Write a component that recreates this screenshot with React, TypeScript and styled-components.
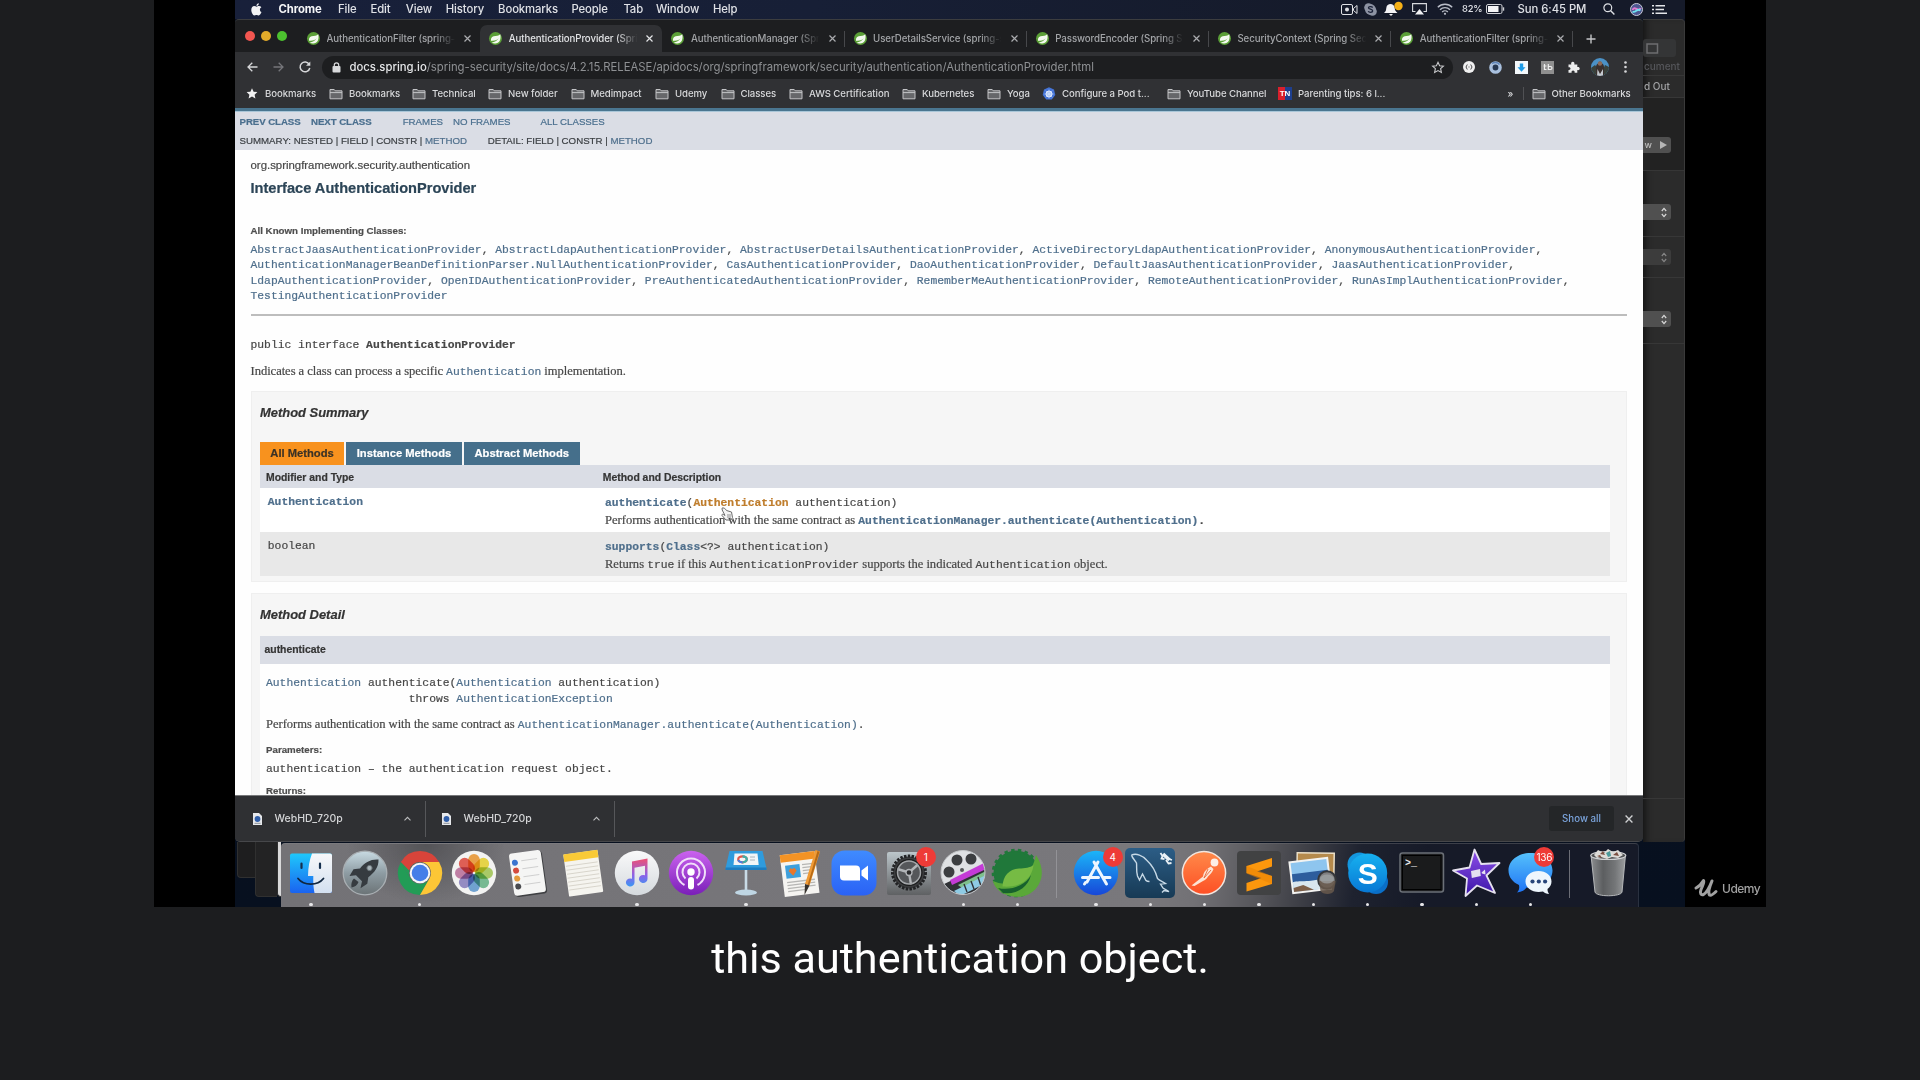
import React from 'react';
import styled, { createGlobalStyle, css } from 'styled-components';

const sans = '"Liberation Sans", Arial, sans-serif';
const serif = '"Liberation Serif", "Times New Roman", serif';
const mono = '"Liberation Mono", "Courier New", monospace';
const ui = 'Inter, "Liberation Sans", sans-serif';

const Global = createGlobalStyle`
  *, *::before, *::after { box-sizing: border-box; }
  html, body { margin: 0; background: #1c1d1f; overflow: hidden; }
  svg { display: block; flex: none; overflow: visible; }
`;

/* ---------- Player ---------- */

const Player = styled.div`
  width: 1920px;
  height: 1080px;
  background: #1c1d1f;
  display: flex;
  flex-direction: column;
  align-items: center;
  overflow: hidden;
`;

const VideoFrame = styled.div`
  width: 1612px;
  height: 907px;
  background: #000;
  display: flex;
  padding-left: 81px;
  flex: none;
`;

const Desktop = styled.div`
  width: 1450px;
  height: 907px;
  background: linear-gradient(#0b1120, #07101f);
  display: flex;
  flex-direction: column;
  overflow: hidden;
  flex: none;
`;

const Caption = styled.p`
  margin: 25px 0 0;
  font: 400 43.15px/54px Roboto, sans-serif;
  color: #fff;
  white-space: nowrap;
`;

const Watermark = styled.div`
  width: 81px;
  padding: 0 0 9px 10px;
  display: flex;
  align-items: flex-end;
  gap: 4px;
  color: #a2a2a2;
  font: 500 12px/18px ${ui};
  letter-spacing: -0.5px;
`;

/* ---------- Menu bar ---------- */

const MenuBar = styled.header`
  height: 19px;
  display: flex;
  align-items: center;
  padding-bottom: 1px;
  background: linear-gradient(90deg, #18203a, #171f36 40%, #151a29 80%);
  color: #dfe1e6;
  font: 500 11.3px/18px ${ui};
  flex: none;
`;

const MenuItem = styled.span<{ $w: number; $strong?: boolean }>`
  width: ${p => p.$w}px;
  flex: none;
  white-space: nowrap;
  letter-spacing: -0.1px;
  ${p => p.$strong && css`font-weight: 700; color: #f4f5f7;`}
`;

const StatusCell = styled.span<{ $w: number }>`
  width: ${p => p.$w}px;
  display: flex;
  justify-content: center;
  flex: none;
  white-space: nowrap;
`;

const Percent = styled.span`
  width: 20px;
  font-size: 9.4px;
  letter-spacing: -0.2px;
  white-space: nowrap;
  flex: none;
`;

const Clock = styled.span`
  width: 83px;
  padding-left: 8.5px;
  white-space: nowrap;
  letter-spacing: -0.05px;
  flex: none;
`;

const Spacer = styled.div`flex: 1;`;

/* ---------- Windows ---------- */

const WindowsRow = styled.div`
  height: 823px;
  display: flex;
  flex: none;
`;

const Browser = styled.section`
  width: 1408px;
  height: 823px;
  display: flex;
  flex-direction: column;
  background: #2f3033;
  border-top: 1px solid #3c3d3f;
  border-bottom: 1px solid #46474a;
  border-radius: 4px 4px 5px 5px;
  overflow: hidden;
  flex: none;
`;

const TabStrip = styled.div`
  height: 32px;
  display: flex;
  align-items: flex-end;
  background: #1d1e20;
  flex: none;
`;

const TrafficLights = styled.div`
  width: 63px;
  height: 32px;
  padding-left: 10px;
  display: flex;
  align-items: center;
  gap: 6px;
  flex: none;
`;

const Light = styled.i<{ $c: string }>`
  width: 10px;
  height: 10px;
  border-radius: 50%;
  background: ${p => p.$c};
`;

const Tab = styled.div<{ $active?: boolean; $line?: boolean }>`
  width: 182.2px;
  height: 27px;
  display: flex;
  align-items: center;
  padding: 0 9px 0 9px;
  gap: 6.5px;
  position: relative;
  color: ${p => (p.$active ? '#e3e4e6' : '#a3a5a8')};
  background: ${p => (p.$active ? '#303134' : 'transparent')};
  border-radius: 7px 7px 0 0;
  flex: none;
  &::after {
    content: '';
    position: absolute;
    right: 0;
    top: 6px;
    width: 1px;
    height: 16px;
    background: ${p => (p.$line ? '#47484b' : 'transparent')};
  }
`;

const TabTitle = styled.span`
  flex: 1;
  overflow: hidden;
  white-space: nowrap;
  font: 500 9.7px/16px ${ui};
  letter-spacing: -0.08px;
  mask-image: linear-gradient(90deg, #000 82%, transparent 98%);
`;

const NewTab = styled.div`
  height: 27px;
  padding-left: 13px;
  display: flex;
  align-items: center;
`;

const Toolbar = styled.div`
  height: 30px;
  display: flex;
  align-items: center;
  background: #303134;
  flex: none;
`;

const ToolCell = styled.span<{ $w: number }>`
  width: ${p => p.$w}px;
  display: flex;
  justify-content: center;
  align-items: center;
  flex: none;
`;

const Omnibox = styled.div`
  width: 1131px;
  height: 23px;
  padding: 0 8px 0 9.5px;
  border-radius: 12px;
  background: #1d1e20;
  display: flex;
  align-items: center;
  color: #8e9093;
  font: 400 11.3px/18px ${ui};
  flex: none;
`;

const Url = styled.span`
  flex: 1;
  margin-left: 9px;
  white-space: nowrap;
  letter-spacing: 0.006px;
  b { font-weight: 500; color: #e4e5e7; }
`;

const BookmarksBar = styled.nav`
  height: 26px;
  padding: 0 0 3px 10px;
  display: flex;
  align-items: center;
  background: #303134;
  flex: none;
`;

const Bookmark = styled.span<{ $w: number }>`
  width: ${p => p.$w}px;
  display: flex;
  align-items: center;
  gap: 6px;
  flex: none;
  white-space: nowrap;
  color: #d8d9db;
  font: 500 9.6px/16px ${ui};
  letter-spacing: -0.05px;
`;

const BarDivider = styled.i`
  width: 1px;
  height: 13px;
  margin: 0 8px 0 6px;
  background: #505154;
`;

/* ---------- Javadoc page ---------- */

const Page = styled.main`
  height: 687px;
  background: #fefefe;
  border-top: 3px solid #4a7690;
  overflow: hidden;
  color: #474747;
  font-family: ${sans};
  -webkit-text-stroke: 0.2px;
  flex: none;
`;

const DocNav = styled.div`
  height: 39px;
  background: #dadde5;
  padding-left: 4.5px;
  border-top: 1px solid #a9c6d8;
  font-size: 9.7px;
  line-height: 19px;
  color: #3b3f43;
`;

const NavRow = styled.div`
  height: 19px;
  display: flex;
  white-space: nowrap;
`;

const NavCell = styled.span<{ $w: number; $link?: boolean; $strong?: boolean }>`
  width: ${p => p.$w}px;
  flex: none;
  ${p => p.$link && css`color: #4a6f8e;`}
  ${p => p.$strong && css`font-weight: 700; letter-spacing: -0.08px;`}
`;

const Link = styled.a<{ $hot?: boolean }>`
  color: ${p => (p.$hot ? '#bf7d2c' : '#4f6f8c')};
`;

const Body = styled.div`
  padding: 6px 16px 0 15.5px;
`;

const PackageName = styled.div`
  font-size: 11.4px;
  line-height: 18px;
`;

const ClassTitle = styled.h1`
  margin: 5px 0 0;
  font-size: 14.6px;
  line-height: 18px;
  color: #2c4557;
`;

const ListLabel = styled.h4<{ $mt: number }>`
  margin: ${p => p.$mt}px 0 0;
  font-size: 9.73px;
  line-height: 14px;
  color: #4e4e4e;
`;

const Code = styled.code<{ $strong?: boolean }>`
  font-family: ${mono};
  font-size: 11.34px;
  ${p => p.$strong && css`font-weight: 700;`}
`;

const ClassList = styled.div`
  margin-top: 5px;
  line-height: 15.36px;
  white-space: nowrap;
  ${Code} { display: block; height: 15.36px; }
`;

const Rule = styled.hr`
  height: 2px;
  margin: 9.5px 0 0;
  border: 0;
  background: #bdbdbd;
`;

const Signature = styled.pre`
  margin: 21.5px 0 0;
  font: 11.34px/16px ${mono};
`;

const Prose = styled.p<{ $mt?: number }>`
  margin: ${p => p.$mt ?? 0}px 0 0;
  font: 12.55px/18px ${serif};
  letter-spacing: -0.03px;
  white-space: nowrap;
  ${Code} { letter-spacing: 0; }
`;

const Section = styled.section<{ $mt: number; $h: number }>`
  margin-top: ${p => p.$mt}px;
  height: ${p => p.$h}px;
  padding: 12px 16px 0 8.5px;
  background: #f6f6f6;
  border: 1px solid #efefef;
`;

const SectionTitle = styled.h3`
  margin: 0;
  font-size: 12.95px;
  font-style: italic;
  line-height: 18px;
  color: #333;
`;

const MethodTabs = styled.div`
  margin-top: 20px;
  height: 23px;
  display: flex;
  gap: 2px;
`;

const MethodTab = styled.span<{ $active?: boolean; $w: number }>`
  width: ${p => p.$w}px;
  background: ${p => (p.$active ? '#f8921e' : '#456f8b')};
  color: ${p => (p.$active ? '#3a3226' : '#fff')};
  font-size: 11.2px;
  font-weight: 700;
  line-height: 23px;
  text-align: center;
`;

const TableHead = styled.div`
  height: 23px;
  padding-left: 6px;
  display: grid;
  grid-template-columns: 336.8px 1fr;
  background: #dadde5;
  color: #353535;
  font-size: 10.4px;
  font-weight: 700;
  line-height: 25px;
`;

const TableRow = styled.div<{ $alt?: boolean }>`
  height: 44px;
  padding: 6px 0 0 7.8px;
  display: grid;
  grid-template-columns: 337.2px 1fr;
  background: ${p => (p.$alt ? '#e8e8e8' : '#fff')};
  line-height: 17px;
`;

const DescLine = styled.div`
  height: 17.5px;
  white-space: nowrap;
  position: relative;
  font: 12.55px/17.5px ${serif};
`;

const Pointer = styled.svg`
  position: absolute;
  left: 116px;
  top: 13px;
`;

const MemberTitle = styled.h4`
  margin: 12px 0 0;
  height: 28px;
  padding-left: 4.500px;
  background: #dadde5;
  font-size: 10.4px;
  line-height: 28px;
  color: #353535;
`;

const MemberBody = styled.div`
  height: 160px;
  padding: 12px 0 0 6px;
  background: #fefefe;
`;

const MemberCode = styled.pre`
  margin: 0;
  font: 11.34px/15.5px ${mono};
`;

/* ---------- Download shelf ---------- */

const Shelf = styled.footer`
  flex: 1;
  display: flex;
  align-items: center;
  background: #2f3033;
  border-top: 1px solid #77787a;
  color: #d4d5d7;
  font: 500 10.5px/18px ${ui};
`;

const Download = styled.div<{ $w: number; $pl: number }>`
  width: ${p => p.$w}px;
  height: 36px;
  padding: 0 14.500px 0 ${p => p.$pl}px;
  border-right: 1px solid #56575a;
  display: flex;
  align-items: center;
  gap: 13px;
  flex: none;
  span { flex: 1; }
`;

const ShowAll = styled.button`
  width: 65px;
  height: 25px;
  border: 0;
  border-radius: 3px;
  background: #242628;
  color: #7ba4dc;
  font: 500 9.7px/24px ${ui};
  padding: 0;
`;

/* ---------- Window behind the browser ---------- */

const BackWindow = styled.aside`
  width: 42px;
  height: 823px;
  padding-top: 19px;
  background: #2b2b2b;
  border-radius: 0 4px 4px 0;
  border-right: 1px solid #3a3a3a;
  border-top: 1px solid #3c3c3c;
  box-shadow: inset 7px 0 7px -5px #111;
  overflow: hidden;
  flex: none;
  font: 500 10px/14px ${ui};
`;

const BackButton = styled.div`
  width: 33px;
  height: 18px;
  padding: 3.5px 0 0 3px;
  border-radius: 3px;
  background: #343536;
`;

const BackText = styled.div<{ $mt: number; $c: string }>`
  margin-top: ${p => p.$mt}px;
  height: 14px;
  padding-left: 1px;
  color: ${p => p.$c};
  white-space: nowrap;
`;

const BackLine = styled.i<{ $mt: number }>`
  display: block;
  height: 1px;
  margin-top: ${p => p.$mt}px;
  background: #373737;
`;

const Stage = styled.div`
  height: 73px;
  padding-top: 39px;
  background: #222;
  border-bottom: 1px solid #363636;
`;

const Stepper = styled.div<{ $mt: number; $dim?: boolean }>`
  width: 28px;
  height: 16px;
  margin-top: ${p => p.$mt}px;
  padding: 0 4px 0 0;
  display: flex;
  align-items: center;
  justify-content: flex-end;
  gap: 8px;
  border-radius: 0 3px 3px 0;
  color: ${p => (p.$dim ? '#777' : '#bcbcbc')};
  background: ${p => (p.$dim ? '#3c3c3c' : '#505050')};
  font-size: 9px;
`;

/* ---------- Dock ---------- */

const DockRow = styled.div`
  height: 65px;
  display: flex;
  flex: none;
`;

const Behind = styled.i<{ $ml?: number; $w: number; $h: number; $c: string }>`
  width: ${p => p.$w}px;
  height: ${p => p.$h}px;
  margin-left: ${p => p.$ml ?? 0}px;
  background: ${p => p.$c};
  border-radius: 0 0 0 4px;
  border-left: 1px solid #303030;
  border-bottom: 1px solid #303030;
  flex: none;
`;

const Dock = styled.div`
  width: 1358px;
  height: 64px;
  margin-top: 1px;
  padding-left: 2.8px;
  display: flex;
  border-radius: 4px 4px 0 0;
  border-top: 1px solid #8a8a8d55;
  border-right: 1px solid #2a3140;
  background:
    radial-gradient(ellipse 80px 60px at 145px 0, #454549b0, transparent),
    linear-gradient(100deg, #737276 0, #79787c 64%, #727175 67.5%, #535358 72.5%, #3f4047 75%, #1e222f 79%, #161a28 84%);
  flex: none;
`;

const DockItem = styled.div<{ $running?: boolean }>`
  width: 54.35px;
  height: 63px;
  padding-top: 6px;
  display: flex;
  justify-content: center;
  position: relative;
  flex: none;
  &::after {
    content: '';
    position: absolute;
    left: 25.6px;
    bottom: 1px;
    width: 3.4px;
    height: 3.4px;
    border-radius: 50%;
    background: ${p => (p.$running ? '#e6e6e8' : 'transparent')};
  }
`;

const DockDivider = styled.i`
  width: 1px;
  height: 48px;
  margin: 6px 11.5px 0;
  background: #a5a5aa;
  opacity: 0.6;
  flex: none;
`;

const Badge = styled.span<{ $left: number }>`
  position: absolute;
  left: ${p => p.$left}px;
  top: 3px;
  min-width: 20px;
  height: 20px;
  border-radius: 10px;
  background: #ee3b37;
  color: #fff;
  font: 400 10px/20px ${ui};
  letter-spacing: -0.2px;
  text-align: center;
`;

/* ---------- Small glyphs ---------- */

const SpringLeaf = () => (
  <svg width="13" height="13" viewBox="0 0 13 13">
    <circle cx="6.5" cy="6.5" r="6.5" fill="#5b9f37" />
    <path d="M11.200 2.200C10 4 7 3.600 4.600 4.300 2.200 5 1.400 7.400 2.300 9c2.300-.6 5.300-.2 7.300-2.800C8 9.200 5.400 9.600 2.800 10.400 5.500 12.300 9.600 11.400 10.900 8.400c.8-2 .9-4.200.3-6.200z" fill="#f3f9ef" />
  </svg>
);

const Close = ({ size = 7, color = '#b5b6b9' }: { size?: number; color?: string }) => (
  <svg width={size} height={size} viewBox="0 0 7 7">
    <path d="M.5.5l6 6M6.500.5l-6 6" stroke={color} strokeWidth="1.2" fill="none" />
  </svg>
);

const Folder = () => (
  <svg width="14" height="12" viewBox="0 0 14 12">
    <path d="M1 1.500h4.200l1 1.300H13v8H1z" fill="#66676a" stroke="#c3c4c6" strokeWidth="1" />
    <path d="M1 4.600h12" stroke="#c3c4c6" strokeWidth="1" />
  </svg>
);

const Star = ({ filled }: { filled?: boolean }) => (
  <svg width="14" height="13" viewBox="0 0 14 13">
    <path
      d="M7 1.200l1.600 3.500 3.800.4-2.800 2.600.8 3.800L7 9.600l-3.400 1.900.8-3.800L1.600 5.100l3.800-.4z"
      fill={filled ? '#f1f1f2' : 'none'}
      stroke={filled ? 'none' : '#c9cacc'}
      strokeWidth="1.100"
    />
  </svg>
);

const Kubernetes = () => (
  <svg width="14" height="14" viewBox="0 0 14 14">
    <path d="M7 .3l5 2.300 1.300 5.400-3.500 4.500-5.600 0L.7 8 2 2.600z" fill="#4574d6" />
    <circle cx="7" cy="7" r="3" fill="#a9c3f3" stroke="#dfe9fc" strokeWidth="1" />
    <path d="M7 2.500v9M2.500 7h9M3.800 3.800l6.400 6.400M10.200 3.800l-6.400 6.400" stroke="#cfdefa" strokeWidth=".6" />
  </svg>
);

const TnMark = styled.i`
  width: 14px;
  height: 13px;
  background: linear-gradient(90deg, #d81f2c 50%, #1e3f8f 50%);
  color: #fff;
  font: 700 8px/13px ${sans};
  text-align: center;
  flex: none;
`;

const Apple = () => (
  <svg width="11" height="13" viewBox="0 0 11 13">
    <path d="M7.800.3c.1 1.300-1 2.600-2.300 2.600C5.400 1.600 6.500.500 7.800.3zM8.900 6.800c0-1.200.6-1.900 1.500-2.500-.6-.8-1.500-1.200-2.500-1.200-1 0-1.600.6-2.300.6S4 3.100 3.200 3.100C1.700 3.200.3 4.600.3 7.100c0 2.400 1.600 5.400 3 5.400.8 0 1.200-.5 2.200-.5s1.300.5 2.200.5c1.200 0 2.300-2 2.800-3.400-1-.4-1.600-1.200-1.600-2.300z" fill="#f2f3f5" />
  </svg>
);

const FileIcon = () => (
  <svg width="9" height="12" viewBox="0 0 9 12">
    <path d="M0 0h6l3 3v9H0z" fill="#e6e8eb" />
    <circle cx="4.500" cy="6" r="2.900" fill="#2f5da8" />
    <path d="M1.500 10.300h6" stroke="#8b8f96" strokeWidth="1" />
  </svg>
);

const Chevron = () => (
  <svg width="7" height="5" viewBox="0 0 7 5">
    <path d="M.5 4.300l3-3 3 3" stroke="#bcbdbf" strokeWidth="1.100" fill="none" />
  </svg>
);

const Arrow = ({ flip, color }: { flip?: boolean; color: string }) => (
  <svg width="11" height="10" viewBox="0 0 11 10" transform={flip ? 'scale(-1 1)' : undefined}>
    <path d="M10.500 5H1M5.300.7L1 5l4.300 4.300" stroke={color} strokeWidth="1.300" fill="none" />
  </svg>
);

const UpDown = ({ color }: { color: string }) => (
  <svg width="6" height="11" viewBox="0 0 6 11">
    <path d="M.8 4L3 1.400 5.200 4M.8 7L3 9.600 5.200 7" stroke={color} strokeWidth="1.200" fill="none" />
  </svg>
);

/* ---------- Dock icons, drawn on a 46 x 46 grid ---------- */

const Icon = ({ children }: { children: React.ReactNode }) => (
  <svg width="46" height="46" viewBox="0 0 46 46">{children}</svg>
);

const Finder = () => (
  <Icon>
    <defs>
      <linearGradient id="fL" x2="0" y2="1"><stop stopColor="#1fc8fb" /><stop offset="1" stopColor="#1a63f0" /></linearGradient>
      <linearGradient id="fR" x2="0" y2="1"><stop stopColor="#f7f8fa" /><stop offset="1" stopColor="#d3e0f0" /></linearGradient>
    </defs>
    <rect x="2" y="3.500" width="42" height="39.500" rx="2" fill="url(#fL)" />
    <path d="M24 3.500h18a2 2 0 012 2V41a2 2 0 01-2 2H26.500c-1-5-1.400-10-1.200-17H20c.2-9 1.500-16 4-22.500z" fill="url(#fR)" />
    <path d="M13.500 13.500v4.500M32 13.500v4.500" stroke="#15304f" strokeWidth="2.200" strokeLinecap="round" />
    <path d="M10 28.500c6 7.500 19.500 7.500 25.500 0" stroke="#10263f" strokeWidth="1.800" fill="none" strokeLinecap="round" />
  </Icon>
);

const Launchpad = () => (
  <Icon>
    <defs><linearGradient id="lp" x2="0" y2="1"><stop stopColor="#c8dbe3" /><stop offset=".5" stopColor="#8e9ca3" /><stop offset="1" stopColor="#6b7376" /></linearGradient></defs>
    <circle cx="23" cy="23" r="21.800" fill="url(#lp)" stroke="#a9afb3" strokeWidth="1.300" />
    <path d="M36.500 9.500c-8-.5-14 3-18.500 9l-6.500.8L7.500 26l6.500-.8 6 6-1.500 7 6.800-4.500 1-6.500c6-4.500 10.500-10 10.200-17.700z" fill="#363b40" />
    <circle cx="27.500" cy="18" r="2.600" fill="#a9b5ba" stroke="#6d767b" />
    <path d="M12 28.500c-2.500 2-3 6-2.500 9 3.500-.5 6-2.500 7-5.500z" fill="#363b40" />
  </Icon>
);

const Chrome = () => (
  <Icon>
    <path d="M3.900 12A22 22 0 0023 45l9.500-16.500a11 11 0 01-19 0z" fill="#229c56" />
    <path d="M42.100 12A22 22 0 0123 45l9.500-16.500A11 11 0 0023 12z" fill="#fcc636" />
    <path d="M3.900 12l9.600 16.500a11 11 0 0110-16.500z" fill="#229c56" />
    <path d="M3.900 12a22 22 0 0138.200 0H23a11 11 0 00-10.800 8.500z" fill="#d8443a" />
    <circle cx="23" cy="23" r="10.300" fill="#f7f7f7" />
    <circle cx="23" cy="23" r="8.300" fill="#447ee8" />
  </Icon>
);

const petals = ['#f2992e', '#f0d92c', '#a5cb52', '#66b888', '#5d9bd6', '#8a80c4', '#c0709f', '#e5483c'];
const PetalShape = styled.rect`
  mix-blend-mode: multiply;
`;

const Photos = () => (
  <Icon>
    <circle cx="23" cy="23" r="22.200" fill="#f3f3f2" />
    {petals.map((c, i) => (
      <PetalShape key={c} x="17.200" y="4" width="11.600" height="18" rx="5.800" fill={c} opacity=".85" transform={`rotate(${i * 45} 23 23)`} />
    ))}
  </Icon>
);

const reminderDots = ['#3b74cf', '#d44a3c', '#e39a3b', '#4a4b4f'];
const Reminders = () => (
  <Icon>
    <g transform="rotate(-8 23 23)">
      <rect x="8" y="2.500" width="31.500" height="43" rx="3" fill="#3f4043" />
      <rect x="6.500" y="1.500" width="32" height="42.500" rx="3" fill="#f5f5f4" />
      {reminderDots.map((c, i) => (
        <g key={c}>
          <circle cx="11.500" cy={11 + i * 8} r="3" fill={c} />
          <path d={`M18 ${10 + i * 8}h16`} stroke="#cfcfcf" strokeWidth="1" />
        </g>
      ))}
    </g>
  </Icon>
);

const Notes = () => (
  <Icon>
    <g transform="rotate(-8 23 23)">
      <rect x="6" y="2" width="34.500" height="42.500" rx="1" fill="#f5f4ef" />
      <rect x="6" y="2" width="34.500" height="7.500" fill="#f9ca37" />
      {[14, 18, 22, 26, 30, 34, 38].map(y => <path key={y} d={`M7 ${y}h32`} stroke="#d6d3ca" strokeWidth=".9" />)}
    </g>
  </Icon>
);

const Music = () => (
  <Icon>
    <defs>
      <linearGradient id="mu" x2="0" y2="1"><stop stopColor="#f9f9fa" /><stop offset="1" stopColor="#d5dade" /></linearGradient>
      <linearGradient id="mn" x2="0" y2="1"><stop stopColor="#ef4f73" /><stop offset=".6" stopColor="#8c62e8" /><stop offset="1" stopColor="#3b97f3" /></linearGradient>
    </defs>
    <circle cx="23" cy="23" r="22.200" fill="url(#mu)" />
    <path d="M18 11.500l15.500-3v20.500a4.300 4 0 11-2.500-3.700V15.800l-10.500 2v14.700a4.300 4 0 11-2.500-3.700z" fill="url(#mn)" />
  </Icon>
);

const Podcasts = () => (
  <Icon>
    <defs><linearGradient id="po" x2="0" y2="1"><stop stopColor="#ca62ee" /><stop offset="1" stopColor="#7a1fb8" /></linearGradient></defs>
    <circle cx="23" cy="23" r="22.200" fill="url(#po)" />
    <g fill="none" stroke="#f0def9" strokeWidth="2">
      <path d="M16.500 35a14 14 0 1113 0" />
      <path d="M17.500 28.500a8.500 8.500 0 1111 0" />
    </g>
    <circle cx="23" cy="22" r="3.700" fill="#fff" />
    <rect x="20" y="27" width="6" height="12.500" rx="3" fill="#fff" />
  </Icon>
);

const Keynote = () => (
  <Icon>
    <path d="M23 18v23" stroke="#c9dbe6" strokeWidth="2.600" />
    <ellipse cx="23" cy="42.500" rx="11" ry="3" fill="#bfd6e4" />
    <path d="M6.500 1h33l4 17.500h-41z" fill="#2f9bdd" />
    <path d="M2.500 17.500h41v2.500h-41z" fill="#1d7cc0" />
    <path d="M11.500 3.500h23l1.200 11.500H10.500z" fill="#f2f5f7" />
    <ellipse cx="19.500" cy="9.300" rx="4.300" ry="3" fill="none" stroke="#e0574b" strokeWidth="2.200" />
    <path d="M19.500 6.300a4.300 3 0 010 6" fill="none" stroke="#3cb0a8" strokeWidth="2.200" />
    <path d="M15.300 10a4.300 3 0 004.200 2.300" fill="none" stroke="#4a7fe0" strokeWidth="2.200" />
    <path d="M27 7h5M27 10h5" stroke="#aab4bb" />
  </Icon>
);

const Pages = () => (
  <Icon>
    <g transform="rotate(-7 23 23)">
      <rect x="5" y="3" width="35" height="42" fill="#f5f4f1" />
      <rect x="5" y="3" width="35" height="7.500" fill="#f39325" />
      <rect x="9" y="14" width="14.500" height="13" fill="#3ea0dc" />
      <path d="M16 25l-4-5 2-3 2 1 2-1 2 3z" fill="#e8772b" />
      <path d="M26 15h11M26 18h11M26 21h11M26 24h8M9 31h28M9 34h28M9 37h28M9 40h18" stroke="#b6b6b4" strokeWidth="1.300" />
    </g>
    <path d="M38.500 0l4.500 1.500-10.500 34-4.500-1.500z" fill="#f09a34" />
    <path d="M40.500 1l2 .700-10.500 34-1.500-.5z" fill="#b66a16" />
    <path d="M28 34l4.500 1.500-5 9.500z" fill="#36312c" />
  </Icon>
);

const Zoom = () => (
  <Icon>
    <defs><linearGradient id="zm" x2="0" y2="1"><stop stopColor="#3f8bff" /><stop offset="1" stopColor="#2a62f5" /></linearGradient></defs>
    <rect x=".5" y=".5" width="45" height="45" rx="13" fill="url(#zm)" />
    <path d="M9 15.500h16a4 4 0 014 4v11H13a4 4 0 01-4-4z" fill="#fff" />
    <path d="M30.500 20.500l6.500-5v15l-6.500-5z" fill="#fff" />
  </Icon>
);

const Settings = () => (
  <Icon>
    <defs><linearGradient id="st" x2="0" y2="1"><stop stopColor="#bcc6cb" /><stop offset="1" stopColor="#5f6163" /></linearGradient></defs>
    <rect x="1" y="2" width="44" height="43" rx="2" fill="url(#st)" />
    <circle cx="23" cy="22.500" r="16" fill="#3b3c3e" />
    <circle cx="23" cy="22.500" r="16.500" fill="none" stroke="#222325" strokeWidth="3" strokeDasharray="2.500 1.300" />
    <circle cx="23" cy="22.500" r="12.500" fill="#55575a" stroke="#1b1c1d" strokeWidth="2" />
    <path d="M23 22.500L11.500 19M23 22.500l9-8M23 22.500l2 12" stroke="#b2b5b8" strokeWidth="2.400" />
    <circle cx="23" cy="22.500" r="11.500" fill="none" stroke="#a3a6a9" strokeWidth="1.500" />
    <circle cx="23" cy="22.500" r="3" fill="#2a2b2d" stroke="#b2b5b8" strokeWidth="1.300" />
  </Icon>
);

const ScreenFlow = () => (
  <Icon>
    <clipPath id="sf"><circle cx="23" cy="22.500" r="22" /></clipPath>
    <g clipPath="url(#sf)">
      <rect width="46" height="46" fill="#dfe1e4" />
      <circle cx="17" cy="10" r="5.500" fill="#3c3e41" />
      <circle cx="31" cy="9" r="5.500" fill="#3c3e41" />
      <circle cx="9" cy="22" r="5.500" fill="#3c3e41" />
      <circle cx="22" cy="20" r="2" fill="#55575a" />
      <path d="M-2 37L48 13v36H-2z" fill="#303236" />
      <path d="M10 30l34-17v7L12 35z" fill="#c43bd6" />
      <path d="M18 35l28-14v5L22 38z" fill="#7fc08c" />
      <path d="M14 41l32-16v8L20 46z" fill="#8ecbe4" />
      <path d="M24 34l3 8M31 31l3 8M38 27l3 9" stroke="#303236" strokeWidth="1.400" />
    </g>
    <circle cx="23" cy="22.500" r="22" fill="none" stroke="#c6c9cc" strokeWidth="1" />
  </Icon>
);

const SpringSuite = () => (
  <Icon>
    <circle cx="22" cy="23" r="22.500" fill="#20783a" stroke="#20783a" strokeWidth="3.600" strokeDasharray="3.400 3.300" />
    <path d="M42 5c6 9 8 20 3 29-5 10-17 15-28 12C6 44 0 37-1 31c10 5 30 4 38-12 3-6 4-10 5-14z" fill="#5aa839" />
    <path d="M39.500 15C38 28 28 38 8.500 36.500 9 26 15 19 25 18.500c6-.3 11-.5 14.500-3.500z" fill="#76bb44" />
    <path d="M4 38c12 3 27-2 33-13-3 12-14 20-28 18z" fill="#17612d" />
  </Icon>
);

const AppStore = () => (
  <Icon>
    <defs><linearGradient id="as" x2="0" y2="1"><stop stopColor="#1bb5f8" /><stop offset="1" stopColor="#1747d8" /></linearGradient></defs>
    <circle cx="23" cy="23" r="22.200" fill="url(#as)" />
    <g stroke="#eef6ff" strokeWidth="3" strokeLinecap="round" fill="none">
      <path d="M25 12L14 32M21 12l12.500 22" />
      <path d="M9.500 27.500h16M31 27.500h6" />
      <path d="M12.500 32.500l-1 1.500" />
    </g>
  </Icon>
);

const Workbench = () => (
  <Icon>
    <defs><linearGradient id="wb" x2="0" y2="1"><stop stopColor="#2c5d86" /><stop offset="1" stopColor="#173a55" /></linearGradient></defs>
    <rect x="-2" y="-2" width="50" height="50" rx="5" fill="url(#wb)" />
    <path d="M4.500 5c5-2 11 .5 15 5 6 5.500 9.500 12.500 11 18.500 2.500 2.500 6 3.500 8 5l-5 .5 2.500 4 6 3.500-5-1-2 2M4.500 5c.5 2.500 3.500 5.500 5 8 .5 4.500-.5 8 1 13l2 4 3-6 3.500 6.500c1 1 2.500 1 3.500 1" fill="none" stroke="#c7d9e6" strokeWidth="1.400" />
    <path d="M36 4l6.500 6" stroke="#eaf1f6" strokeWidth="3.600" />
    <path d="M33.500 3l2 3-1 2.500 3 .5M39 10l2.500 3.500 3-.5M42 9l3 1" stroke="#eaf1f6" strokeWidth="1.800" fill="none" />
  </Icon>
);

const Postman = () => (
  <Icon>
    <defs><linearGradient id="pm" x2="0" y2="1"><stop stopColor="#ff8a4a" /><stop offset="1" stopColor="#fd4f24" /></linearGradient></defs>
    <circle cx="23" cy="23" r="21.600" fill="url(#pm)" stroke="#f2e6df" strokeWidth="1.500" />
    <circle cx="33.500" cy="12.500" r="3.900" fill="#fdeee5" />
    <path d="M30 16.500l2.500 2.500c-1 3.500-3.500 5.500-5.500 7.500-1 2-3 3.500-5 4.500l-8.500 5-3-.5 11.500-9 .5-2.500c1-3 4-6 7.500-7.500z" fill="#fde3d3" />
    <path d="M27 19l-4 9 7-8" fill="none" stroke="#e5683a" strokeWidth=".9" />
  </Icon>
);

const Sublime = () => (
  <Icon>
    <rect x="1" y="1" width="44" height="44" rx="4" fill="#414243" />
    <path d="M10.500 16L36 8v8.500l-15 5L36 26v8l-25.500 7.500V33l15-5-15-5z" fill="#fb970d" />
    <path d="M10.500 16l25.500 10v8L10.500 23.500z" fill="#e98305" opacity=".55" />
  </Icon>
);

const Preview = () => (
  <Icon>
    <rect x="7" y="3" width="37" height="29" fill="#b58a4c" stroke="#eadfc8" strokeWidth="1.500" transform="rotate(1 26 17)" />
    <g transform="rotate(-7 20 24)">
      <rect x="0" y="9" width="40" height="33" fill="#f3f3f1" />
      <rect x="2" y="11" width="36" height="29" fill="#8ec5ee" />
      <rect x="2" y="22" width="36" height="9" fill="#2d5d9d" />
      <path d="M2 30c9-1 16 3 36-1v11H2z" fill="#d8e6ee" />
      <path d="M2 36l10-2 10 6H2z" fill="#7d5f48" />
    </g>
    <circle cx="37" cy="30" r="8.800" fill="#807f80" stroke="#35373a" strokeWidth="2" />
    <path d="M29 31h16.500l-1.500 10c-2 4-11 4-13.500 0z" fill="#68594c" opacity=".85" />
    <ellipse cx="37" cy="29" rx="7" ry="4.500" fill="#a3a6a8" opacity=".7" />
  </Icon>
);

const Letter = styled.text`
  font: 700 30px ${sans};
  fill: #fff;
`;

const Skype = () => (
  <Icon>
    <defs><linearGradient id="sk" x2="0" y2="1"><stop stopColor="#17b1f0" /><stop offset="1" stopColor="#0878d4" /></linearGradient></defs>
    <circle cx="14.500" cy="14.500" r="12" fill="#1496de" />
    <circle cx="31" cy="32" r="12" fill="#0a6fc8" />
    <circle cx="22.700" cy="23" r="19.500" fill="url(#sk)" />
    <Letter x="12.700" y="33.800">S</Letter>
  </Icon>
);

const Prompt = styled.text`
  font: 700 10px ${mono};
  fill: #e9e9e9;
`;

const Terminal = () => (
  <Icon>
    <rect x="1" y="3" width="43.500" height="39" rx="2.500" fill="#1d1e20" stroke="#6b7077" strokeWidth="1.500" />
    <rect x="3.500" y="5.500" width="38.500" height="34" fill="#1a1b1c" stroke="#000" />
    <Prompt x="6" y="15.500">&gt;_</Prompt>
  </Icon>
);

const IMovie = () => (
  <Icon>
    <defs><linearGradient id="im" x2="0" y2="1"><stop stopColor="#8e4fe8" /><stop offset="1" stopColor="#3a15a8" /></linearGradient></defs>
    <path d="M21.500-.5l6.700 14.500 18.300-1L33.500 25.500 42 43 24 35.500 12.500 46l1.500-17.500L0 20.500l16.500-3z" fill="url(#im)" stroke="#e5e1ee" strokeWidth="1.800" strokeLinejoin="round" />
    <path d="M18 21l9-2 .8 7-9 2zM28.500 22.500l3.500-3 .5 5-3.500-1z" fill="#e4dff0" />
  </Icon>
);

const Messages = () => (
  <Icon>
    <defs><linearGradient id="ms" x2="0" y2="1"><stop stopColor="#55c0fb" /><stop offset="1" stopColor="#1f74f5" /></linearGradient></defs>
    <path d="M22.500 3c12.500 0 22 7.500 22 17.500S35 38 22.500 38l-4-.4c-1.500 2.500-4.500 4.500-9.500 5 2-2 2.700-4.500 2-7.500C4.500 32 .5 27 .5 20.500.5 10.500 10 3 22.500 3z" fill="url(#ms)" />
    <path d="M30.500 21c7.500 0 13 4.500 13 10.500 0 3-1.500 5.500-4 7.500 0 2 .5 3.500 1.500 5-2.500 0-4.500-1-6-2.500-9 2-17.500-2.500-17.500-10 0-6 5.500-10.500 13-10.500z" fill="#eef6fd" />
    <circle cx="24.500" cy="31.500" r="2.100" fill="#27457a" />
    <circle cx="30.800" cy="31.500" r="2.100" fill="#27457a" />
    <circle cx="37.100" cy="31.500" r="2.100" fill="#27457a" />
  </Icon>
);

const Trash = () => (
  <Icon>
    <defs><linearGradient id="tr"><stop stopColor="#8b8d8f" /><stop offset=".35" stopColor="#5c5e60" /><stop offset=".7" stopColor="#747678" /><stop offset="1" stopColor="#9b9d9f" /></linearGradient></defs>
    <path d="M5 5l34.500 0-3.500 37c-1 5-26 5-27 0z" fill="url(#tr)" stroke="#b5b7b9" strokeWidth="1" />
    <ellipse cx="22.300" cy="5.500" rx="17.500" ry="4" fill="#4f5153" stroke="#cfd1d3" strokeWidth="1.200" />
    <path d="M8 5l4-5 6 3 4-4 5 3 5-2 5 5-5 3-6-1-5 2-6-2-4 1z" fill="#dddcd8" />
    <path d="M14 4l3-3 2 4zM27 5l4-3 2 4zM11 6l3-1 2 3z" fill="#7b4f40" />
    <path d="M20 3l4-2 1 5-3 1z" fill="#4c9a9a" />
  </Icon>
);

/* ---------- Data ---------- */

const menus: [string, number][] = [
  ['File', 32.5], ['Edit', 35.3], ['View', 40], ['History', 52.3], ['Bookmarks', 73.3],
  ['People', 52], ['Tab', 32.5], ['Window', 57], ['Help', 40],
];

const tabs = [
  { title: 'AuthenticationFilter (spring-' },
  { title: 'AuthenticationProvider (Spri', active: true },
  { title: 'AuthenticationManager (Spri', line: true },
  { title: 'UserDetailsService (spring-s', line: true },
  { title: 'PasswordEncoder (Spring Se', line: true },
  { title: 'SecurityContext (Spring Sec', line: true },
  { title: 'AuthenticationFilter (spring-', line: true },
];

const bookmarks: { label: string; w: number; icon?: React.ReactNode }[] = [
  { label: 'Bookmarks', w: 84, icon: <Star filled /> },
  { label: 'Bookmarks', w: 83 },
  { label: 'Technical', w: 76 },
  { label: 'New folder', w: 82.5 },
  { label: 'Medimpact', w: 84.5 },
  { label: 'Udemy', w: 65.5 },
  { label: 'Classes', w: 68.5 },
  { label: 'AWS Certification', w: 113 },
  { label: 'Kubernetes', w: 85 },
  { label: 'Yoga', w: 55 },
  { label: 'Configure a Pod t...', w: 125, icon: <Kubernetes /> },
  { label: 'YouTube Channel', w: 111 },
  { label: 'Parenting tips: 6 l...', w: 120, icon: <TnMark>TN</TnMark> },
];

const implementers = [
  ['AbstractJaasAuthenticationProvider', 'AbstractLdapAuthenticationProvider', 'AbstractUserDetailsAuthenticationProvider', 'ActiveDirectoryLdapAuthenticationProvider', 'AnonymousAuthenticationProvider'],
  ['AuthenticationManagerBeanDefinitionParser.NullAuthenticationProvider', 'CasAuthenticationProvider', 'DaoAuthenticationProvider', 'DefaultJaasAuthenticationProvider', 'JaasAuthenticationProvider'],
  ['LdapAuthenticationProvider', 'OpenIDAuthenticationProvider', 'PreAuthenticatedAuthenticationProvider', 'RememberMeAuthenticationProvider', 'RemoteAuthenticationProvider', 'RunAsImplAuthenticationProvider'],
  ['TestingAuthenticationProvider'],
];

const dockLeft: { icon: React.ReactNode; running?: boolean; badge?: string }[] = [
  { icon: <Finder />, running: true },
  { icon: <Launchpad /> },
  { icon: <Chrome />, running: true },
  { icon: <Photos /> },
  { icon: <Reminders /> },
  { icon: <Notes /> },
  { icon: <Music />, running: true },
  { icon: <Podcasts /> },
  { icon: <Keynote />, running: true },
  { icon: <Pages /> },
  { icon: <Zoom /> },
  { icon: <Settings />, badge: '1' },
  { icon: <ScreenFlow />, running: true },
  { icon: <SpringSuite />, running: true },
];

const dockRight: typeof dockLeft = [
  { icon: <AppStore />, running: true, badge: '4' },
  { icon: <Workbench />, running: true },
  { icon: <Postman />, running: true },
  { icon: <Sublime />, running: true },
  { icon: <Preview />, running: true },
  { icon: <Skype />, running: true },
  { icon: <Terminal />, running: true },
  { icon: <IMovie />, running: true },
  { icon: <Messages />, running: true, badge: '136' },
];

/* ---------- Sections ---------- */

const TopMenu = () => (
  <MenuBar>
    <StatusCell $w={43.5}><Apple /></StatusCell>
    <MenuItem $w={59.5} $strong>Chrome</MenuItem>
    {menus.map(([label, w]) => <MenuItem key={label} $w={w}>{label}</MenuItem>)}
    <Spacer />
    <StatusCell $w={22}>
      <svg width="17" height="11" viewBox="0 0 17 11"><rect x=".5" y=".5" width="11" height="10" rx="1.500" fill="none" stroke="#e0e1e5" /><circle cx="6" cy="5.500" r="2" fill="#e0e1e5" /><path d="M12.500 4.500l3.500-3v8l-3.500-3z" fill="none" stroke="#e0e1e5" /></svg>
    </StatusCell>
    <StatusCell $w={21}>
      <svg width="13" height="13" viewBox="0 0 13 13"><circle cx="4.500" cy="4.500" r="4.300" fill="#8d93a3" /><circle cx="8.500" cy="8.500" r="4.300" fill="#8d93a3" /><circle cx="6.500" cy="6.500" r="5.400" fill="#8d93a3" /><path d="M8.700 4.500C7.500 3 4.300 3.400 4.500 5c.2 1.500 4.200 1 4.200 2.900C8.600 9.800 5 9.700 4.200 8.200" stroke="#1b2238" strokeWidth="1.300" fill="none" /></svg>
    </StatusCell>
    <StatusCell $w={24}>
      <svg width="19" height="14" viewBox="0 0 19 14"><path d="M0 11c2-1.500 2-3 2.300-5C2.600 3 4.500 2 6.500 2s4 1.500 4.200 4c.2 2 .8 3.500 2.800 5z" fill="#f3f3f5" /><path d="M5 12h4l-2 2z" fill="#f3f3f5" /><circle cx="14.500" cy="4" r="4.200" fill="#f6b117" /></svg>
    </StatusCell>
    <StatusCell $w={28}>
      <svg width="15" height="12" viewBox="0 0 15 12"><path d="M3.500 8.500H.6V.6h13.800v7.900h-2.900" fill="none" stroke="#d8dade" strokeWidth="1.100" /><path d="M7.500 6l4.500 5.500H3z" fill="#f0f1f3" /></svg>
    </StatusCell>
    <StatusCell $w={24}>
      <svg width="16" height="12" viewBox="0 0 16 12"><g fill="none" stroke="#b9bdc7" strokeWidth="1.400"><path d="M.8 4.300a10.200 10.200 0 0114.400 0" /><path d="M3 6.700a7 7 0 0110 0" /><path d="M5.200 9a4 4 0 015.600 0" /></g><circle cx="8" cy="10.800" r="1.100" fill="#b9bdc7" /></svg>
    </StatusCell>
    <StatusCell $w={5}>{null}</StatusCell>
    <Percent>82%</Percent>
    <StatusCell $w={27}>
      <svg width="19" height="10" viewBox="0 0 19 10"><rect x=".5" y=".5" width="15.500" height="9" rx="1.500" fill="none" stroke="#cfd1d6" /><rect x="2" y="2" width="10.500" height="6" fill="#f4f4f6" /><path d="M17.500 3.300v3.400" stroke="#cfd1d6" strokeWidth="1.400" /></svg>
    </StatusCell>
    <Clock>Sun 6:45 PM</Clock>
    <StatusCell $w={34}>
      <svg width="12" height="12" viewBox="0 0 12 12"><circle cx="4.800" cy="4.800" r="3.900" fill="none" stroke="#dddfe3" strokeWidth="1.200" /><path d="M7.700 7.700l3.700 3.700" stroke="#dddfe3" strokeWidth="1.400" /></svg>
    </StatusCell>
    <StatusCell $w={20}>
      <svg width="13" height="13" viewBox="0 0 13 13"><circle cx="6.500" cy="6.500" r="6" fill="#4d5690" stroke="#c7c9d6" /><path d="M2.500 7c2-5 6 3 8-2" stroke="#e07ad0" strokeWidth="2" fill="none" /><path d="M2.500 8.500c3 2 5-4 8-1" stroke="#6fe3f0" strokeWidth="1.800" fill="none" /></svg>
    </StatusCell>
    <StatusCell $w={27}>
      <svg width="15" height="9" viewBox="0 0 15 9"><path d="M0 .8h2M0 4.500h2M0 8.200h2M3.500.8H13M3.500 4.500H12M3.500 8.200H15" stroke="#e4e5e9" strokeWidth="1.400" /></svg>
    </StatusCell>
    <StatusCell $w={12}>{null}</StatusCell>
  </MenuBar>
);

const BrowserChrome = () => (
  <>
    <TabStrip>
      <TrafficLights><Light $c="#f35650" /><Light $c="#e2ab2a" /><Light $c="#4cc12f" /></TrafficLights>
      {tabs.map((t, i) => (
        <Tab key={i} $active={t.active} $line={t.line}>
          <SpringLeaf />
          <TabTitle>{t.title}</TabTitle>
          <Close color={t.active ? '#e3e4e6' : '#aaabae'} />
        </Tab>
      ))}
      <NewTab>
        <svg width="10" height="10" viewBox="0 0 10 10"><path d="M5 .5v9M.5 5h9" stroke="#c4c5c7" strokeWidth="1.400" /></svg>
      </NewTab>
    </TabStrip>
    <Toolbar>
      <ToolCell $w={34}><Arrow color="#d6d7d9" /></ToolCell>
      <ToolCell $w={18}><Arrow flip color="#75767a" /></ToolCell>
      <ToolCell $w={35}>
        <svg width="12" height="12" viewBox="0 0 12 12"><path d="M10.300 3.500A4.900 4.900 0 1010.800 7" fill="none" stroke="#d6d7d9" strokeWidth="1.500" /><path d="M11.300.5v4.300H7z" fill="#d6d7d9" /></svg>
      </ToolCell>
      <Omnibox>
        <svg width="9" height="11" viewBox="0 0 9 11"><rect x=".5" y="4" width="8" height="6.500" rx="1" fill="#d8d9db" /><path d="M2.300 4.500V3a2.200 2.200 0 014.400 0v1.500" fill="none" stroke="#d8d9db" strokeWidth="1.200" /></svg>
        <Url><b>docs.spring.io</b>/spring-security/site/docs/4.2.15.RELEASE/apidocs/org/springframework/security/authentication/AuthenticationProvider.html</Url>
        <Star />
      </Omnibox>
      <Spacer />
      <ToolCell $w={26}>
        <svg width="12" height="12" viewBox="0 0 12 12"><circle cx="6" cy="6" r="6" fill="#f0f0f0" /><path d="M4.300 3.500L3 6l1.300 2.500M7.700 3.500L9 6 7.700 8.500M5.500 6h1" stroke="#4d4d4f" fill="none" /></svg>
      </ToolCell>
      <ToolCell $w={26}>
        <svg width="13" height="13" viewBox="0 0 13 13"><circle cx="6.500" cy="6.500" r="4.600" fill="#243650" stroke="#a9c0de" strokeWidth="3.400" /><path d="M3 2.500C5 .8 9 1 10.500 3.500" stroke="#5c83b8" strokeWidth="1.500" fill="none" /></svg>
      </ToolCell>
      <ToolCell $w={26}>
        <svg width="13" height="13" viewBox="0 0 13 13"><rect width="13" height="13" fill="#f3f8fb" /><path d="M4.800 2.500h3.400v3.700h2.300l-4 4.500-4-4.500h2.300z" fill="#1d9be6" /></svg>
      </ToolCell>
      <ToolCell $w={26}>
        <svg width="13" height="13" viewBox="0 0 13 13"><rect width="13" height="13" fill="#8f8f8f" /><path d="M3.500 3v5.500h2M2.500 5h3M7.300 3v5.500h2.200a1.300 1.300 0 000-3H7.300" stroke="#efefef" strokeWidth="1.200" fill="none" /></svg>
      </ToolCell>
      <ToolCell $w={27}>
        <svg width="12" height="12" viewBox="0 0 12 12"><path d="M.5 3.500h2.800c-.6-1.600.3-2.800 1.500-2.800s2.100 1.200 1.500 2.800h3v2.600c1.400-.4 2.400.4 2.400 1.500s-1 1.900-2.400 1.500v2.600H6.600c.3-1.400-.5-2.200-1.500-2.200s-1.800.8-1.500 2.200H.5V8.900c1.400.2 2-.5 2-1.300S1.900 6.100.5 6.300z" fill="#eceded" /></svg>
      </ToolCell>
      <ToolCell $w={26}>
        <svg width="18" height="18" viewBox="0 0 18 18"><clipPath id="av"><circle cx="9" cy="9" r="9" /></clipPath><g clipPath="url(#av)"><rect width="18" height="18" fill="#4b91c6" /><path d="M0 10l4-3 3 4v7H0zM18 9l-4-2-2 5v6h6z" fill="#39413b" /><path d="M5 18V9c0-2 1-3 2-3.500C7 3 11 3 11 5.500 12.500 6 13 7.500 13 9v9z" fill="#3a302e" /><circle cx="9" cy="5.500" r="2.200" fill="#8c6a58" /><path d="M6.500 11l2.500 5 3-5v7h-6z" fill="#c3c8ce" /></g></svg>
      </ToolCell>
      <ToolCell $w={25}>
        <svg width="3" height="12" viewBox="0 0 3 12"><circle cx="1.500" cy="1.500" r="1.300" fill="#d6d7d9" /><circle cx="1.500" cy="6" r="1.300" fill="#d6d7d9" /><circle cx="1.500" cy="10.500" r="1.300" fill="#d6d7d9" /></svg>
      </ToolCell>
      <ToolCell $w={5}>{null}</ToolCell>
    </Toolbar>
    <BookmarksBar>
      {bookmarks.map((b, i) => <Bookmark key={i} $w={b.w}>{b.icon ?? <Folder />}{b.label}</Bookmark>)}
      <Spacer />
      <Bookmark $w={9}>»</Bookmark>
      <BarDivider />
      <Bookmark $w={111.5}><Folder />Other Bookmarks</Bookmark>
    </BookmarksBar>
  </>
);

const Javadoc = () => (
  <Page>
    <DocNav>
      <NavRow>
        <NavCell $w={71.5} $link $strong>PREV CLASS</NavCell>
        <NavCell $w={91.7} $link $strong>NEXT CLASS</NavCell>
        <NavCell $w={50.3} $link>FRAMES</NavCell>
        <NavCell $w={87.5} $link>NO FRAMES</NavCell>
        <NavCell $w={80} $link>ALL CLASSES</NavCell>
      </NavRow>
      <NavRow>
        <NavCell $w={248.2}>SUMMARY: NESTED | FIELD | CONSTR | <Link>METHOD</Link></NavCell>
        <NavCell $w={180}>DETAIL: FIELD | CONSTR | <Link>METHOD</Link></NavCell>
      </NavRow>
    </DocNav>
    <Body>
      <PackageName>org.springframework.security.authentication</PackageName>
      <ClassTitle>Interface AuthenticationProvider</ClassTitle>
      <ListLabel $mt={27}>All Known Implementing Classes:</ListLabel>
      <ClassList>
        {implementers.map((row, r) => (
          <Code key={r}>
            {row.map((name, i) => (
              <React.Fragment key={name}>
                <Link>{name}</Link>{r < 3 && ','}{i < row.length - 1 && ' '}
              </React.Fragment>
            ))}
          </Code>
        ))}
      </ClassList>
      <Rule />
      <Signature>public interface <b>AuthenticationProvider</b></Signature>
      <Prose $mt={9}>Indicates a class can process a specific <Link><Code>Authentication</Code></Link> implementation.</Prose>

      <Section $mt={10} $h={191}>
        <SectionTitle>Method Summary</SectionTitle>
        <MethodTabs>
          <MethodTab $w={84} $active>All Methods</MethodTab>
          <MethodTab $w={116}>Instance Methods</MethodTab>
          <MethodTab $w={115.5}>Abstract Methods</MethodTab>
        </MethodTabs>
        <TableHead><span>Modifier and Type</span><span>Method and Description</span></TableHead>
        <TableRow>
          <Code $strong><Link>Authentication</Link></Code>
          <div>
            <DescLine>
              <Code><b><Link>authenticate</Link></b>(<b><Link $hot>Authentication</Link></b> authentication)</Code>
              <Pointer width="13" height="15" viewBox="0 0 13 15">
                <path d="M1 1.200C2 .2 4.500 1.500 5.500 3.500l5 1.500 1 5.500-1.500 2.500H5L1 8.500c-.5-1 .5-1.600 1.500-1L4 8.500 1.200 3z" fill="#f4f4f4" stroke="#6d6d6d" strokeWidth="1" />
                <path d="M6 8h4M6 10h4" stroke="#777" strokeWidth=".8" />
              </Pointer>
            </DescLine>
            <DescLine>Performs authentication with the same contract as <Code $strong><Link>AuthenticationManager.authenticate(Authentication)</Link>.</Code></DescLine>
          </div>
        </TableRow>
        <TableRow $alt>
          <Code>boolean</Code>
          <div>
            <DescLine><Code><b><Link>supports</Link></b>(<b><Link>Class</Link></b>&lt;?&gt; authentication)</Code></DescLine>
            <DescLine>Returns <Code>true</Code> if this <Code>AuthenticationProvider</Code> supports the indicated <Code>Authentication</Code> object.</DescLine>
          </div>
        </TableRow>
      </Section>

      <Section $mt={11} $h={240}>
        <SectionTitle>Method Detail</SectionTitle>
        <MemberTitle>authenticate</MemberTitle>
        <MemberBody>
          <MemberCode>
            <Link>Authentication</Link> authenticate(<Link>Authentication</Link> authentication){'\n'}
            {'                     '}throws <Link>AuthenticationException</Link>
          </MemberCode>
          <Prose $mt={8}>Performs authentication with the same contract as <Code><Link>AuthenticationManager.authenticate(Authentication)</Link>.</Code></Prose>
          <ListLabel $mt={8.5}>Parameters:</ListLabel>
          <Prose $mt={2.5}><Code>authentication – the authentication request object.</Code></Prose>
          <ListLabel $mt={5.5}>Returns:</ListLabel>
        </MemberBody>
      </Section>
    </Body>
  </Page>
);

const DockGroup = ({ items }: { items: typeof dockLeft }) => (
  <>
    {items.map((d, i) => (
      <DockItem key={i} $running={d.running}>
        {d.icon}
        {d.badge && <Badge $left={d.badge.length > 1 ? 31 : 34}>{d.badge}</Badge>}
      </DockItem>
    ))}
  </>
);

export default function App() {
  return (
    <Player>
      <Global />
      <VideoFrame>
        <Desktop>
          <TopMenu />
          <WindowsRow>
            <Browser>
              <BrowserChrome />
              <Javadoc />
              <Shelf>
                <Download $w={191} $pl={17.5}><FileIcon /><span>WebHD_720p</span><Chevron /></Download>
                <Download $w={189} $pl={15.5}><FileIcon /><span>WebHD_720p</span><Chevron /></Download>
                <Spacer />
                <ShowAll>Show all</ShowAll>
                <ToolCell $w={29}><Close size={8} color="#cfd0d2" /></ToolCell>
              </Shelf>
            </Browser>
            <BackWindow>
              <BackButton>
                <svg width="13" height="11" viewBox="0 0 13 11"><rect x="1" y="1" width="10.500" height="9" fill="none" stroke="#6d6e70" strokeWidth="1.500" /></svg>
              </BackButton>
              <BackText $mt={2} $c="#55565a">cument</BackText>
              <BackLine $mt={2} />
              <BackText $mt={3} $c="#a1a2a4">d Out</BackText>
              <BackLine $mt={4} />
              <Stage>
                <Stepper $mt={0}>w
                  <svg width="7" height="8" viewBox="0 0 7 8"><path d="M0 0l7 4-7 4z" fill="#b5b5b5" /></svg>
                </Stepper>
              </Stage>
              <Stepper $mt={33}><UpDown color="#d8d8d8" /></Stepper>
              <BackLine $mt={16} />
              <Stepper $mt={12} $dim><UpDown color="#858585" /></Stepper>
              <BackLine $mt={12} />
              <Stepper $mt={33}><UpDown color="#d8d8d8" /></Stepper>
              <BackLine $mt={16} />
              <BackLine $mt={454} />
            </BackWindow>
          </WindowsRow>
          <DockRow>
            <Behind $ml={2} $w={18} $h={36} $c="#1e1e1f" />
            <Behind $w={22} $h={55} $c="#232324" />
            <Behind $w={4} $h={55} $c="#d9d9da" />
            <Dock>
              <DockGroup items={dockLeft} />
              <DockDivider />
              <DockGroup items={dockRight} />
              <DockDivider />
              <DockItem><Trash /></DockItem>
            </Dock>
          </DockRow>
        </Desktop>
        <Watermark>
          <svg width="23" height="19" viewBox="0 0 23 19">
            <path d="M1 9C4 7.500 7 4 8.500 1.500c1.500 1-1 5-2.500 9s0 6 2.500 5C12 13.500 15 7 17 2c-2.500 6-4 12-2.500 14 1.500 1 4-1 6.500-3.500" fill="none" stroke="#a2a2a2" strokeWidth="3" strokeLinecap="round" strokeLinejoin="round" />
          </svg>
          Udemy
        </Watermark>
      </VideoFrame>
      <Caption>this authentication object.</Caption>
    </Player>
  );
}
